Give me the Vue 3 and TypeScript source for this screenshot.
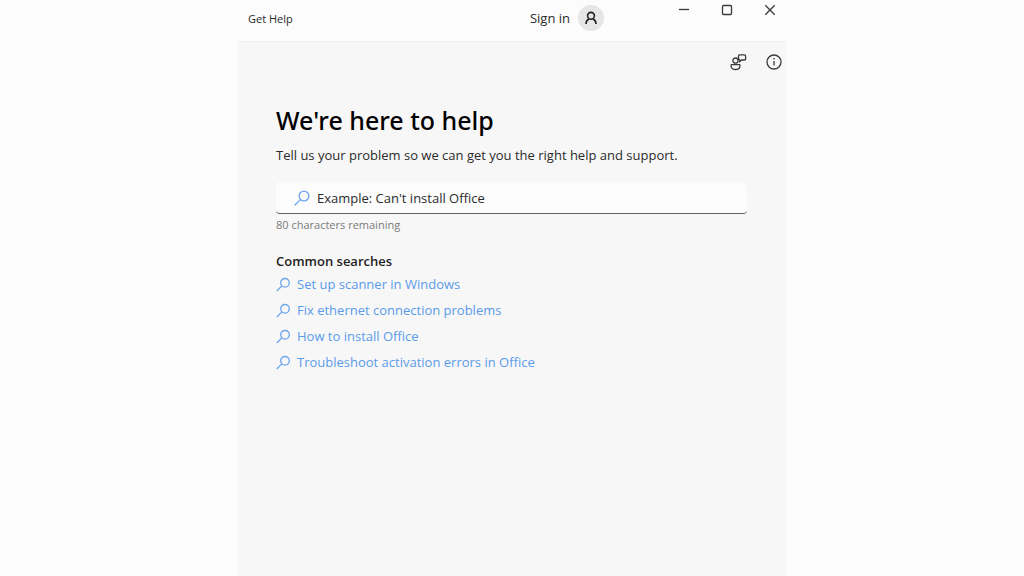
<script setup lang="ts">
import { computed, ref } from 'vue'

const limit = 80
const query = ref('')
const remaining = computed(() => limit - query.value.length)

const searches: string[] = [
  'Set up scanner in Windows',
  'Fix ethernet connection problems',
  'How to install Office',
  'Troubleshoot activation errors in Office',
]
</script>

<template>
  <div class="window">
    <header class="titlebar">
      <span class="app-name">Get Help</span>
      <button class="sign-in" type="button">
        <span>Sign in</span>
        <span class="avatar">
          <svg width="14" height="14" viewBox="0 0 14 14" aria-hidden="true">
            <circle cx="7" cy="4.8" r="3.4" />
            <path d="M2 13 C2 10.5 3 9 4.8 8 M12 13 C12 10.5 11 9 9.2 8" />
          </svg>
        </span>
      </button>
      <div class="controls">
        <button type="button" aria-label="Minimize">
          <svg width="12" height="12" viewBox="0 0 12 12"><path d="M1 5.5H11" /></svg>
        </button>
        <button type="button" aria-label="Maximize">
          <svg width="12" height="12" viewBox="0 0 12 12"><rect x="1.5" y="1.5" width="9" height="9" rx="1" /></svg>
        </button>
        <button type="button" aria-label="Close">
          <svg width="12" height="12" viewBox="0 0 12 12"><path d="M1.3 1.3L10.7 10.7M10.7 1.3L1.3 10.7" /></svg>
        </button>
      </div>
    </header>

    <div class="body">
      <div class="toolbar">
        <button type="button" aria-label="Feedback">
          <svg width="18" height="18" viewBox="0 0 18 18">
            <circle cx="6.5" cy="7.6" r="2.6" />
            <path d="M2.7 11.7H10.3Q11 11.7 11 12.4C11 15 9 16.5 6.5 16.5S2 15 2 12.4Q2 11.7 2.7 11.7Z" />
            <path d="M10.3 1.9H15.6Q16.6 1.9 16.6 2.9V6Q16.6 7 15.6 7H12.7L10.6 8.7V6.9Q9.5 6.7 9.5 5.8V2.8Q9.5 1.9 10.3 1.9Z" />
          </svg>
        </button>
        <button type="button" aria-label="About">
          <svg width="18" height="18" viewBox="0 0 18 18">
            <circle cx="9" cy="9" r="7" />
            <path d="M9 8V12.5M9 5.1V6.5" />
          </svg>
        </button>
      </div>

      <main class="content">
        <h1>We're here to help</h1>
        <label class="intro" for="problem">Tell us your problem so we can get you the right help and support.</label>
        <div class="search">
          <svg class="lens" width="18" height="18" viewBox="0 0 18 18" aria-hidden="true">
            <circle cx="11" cy="7" r="4.9" />
            <path d="M7.4 10.6L1.5 16.5" />
          </svg>
          <input id="problem" v-model="query" type="text" :maxlength="limit" placeholder="Example: Can't install Office">
        </div>
        <p class="count">{{ remaining }} characters remaining</p>
        <h2>Common searches</h2>
        <ul>
          <li v-for="item in searches" :key="item">
            <a href="#">
              <svg class="lens" width="15" height="15" viewBox="0 0 15 15" aria-hidden="true">
                <circle cx="9" cy="5.8" r="4.3" />
                <path d="M5.9 8.9L0.8 14" />
              </svg>
              <span>{{ item }}</span>
            </a>
          </li>
        </ul>
      </main>
    </div>
  </div>
</template>

<style>
body {
  background: #fcfcfc;
}
</style>

<style scoped>
.window {
  box-sizing: border-box;
  display: flex;
  flex-direction: column;
  max-width: 548px;
  min-height: 100vh;
  margin: 0 auto;
  font-family: "Open Sans", "Noto Sans", sans-serif;
  font-size: 13px;
  color: #2b2b2b;
}

button {
  padding: 0;
  border: 0;
  background: none;
  font: inherit;
  color: inherit;
}

svg {
  display: block;
  flex: none;
  fill: none;
  stroke: #3a3a3a;
  stroke-width: 1.3;
}

.titlebar {
  display: flex;
  align-items: flex-start;
  height: 41px;
  padding-left: 10px;
  border-bottom: 1px solid #efefef;
}

.app-name {
  flex: 1;
  padding-top: 10px;
  font-size: 11px;
  line-height: 18px;
}

.sign-in {
  display: flex;
  align-items: center;
  gap: 8px;
  padding-top: 5px;
  margin-right: 58px;
}

.avatar {
  display: grid;
  place-items: center;
  width: 26px;
  height: 26px;
  border-radius: 50%;
  background: #e6e6e6;
}

.avatar svg {
  stroke: #222222;
  stroke-width: 1.6;
}

.controls {
  display: flex;
  margin-right: -5px;
}

.controls button {
  display: grid;
  place-items: center;
  width: 43px;
  height: 19px;
}

.body {
  flex: 1;
  background: #f7f7f7;
}

.toolbar {
  display: flex;
  justify-content: flex-end;
  gap: 18px;
  padding: 11px 3px 0 0;
}

.content {
  padding: 28px 39px 0 38px;
}

h1 {
  margin: 0;
  font-family: "Noto Sans", "Open Sans", sans-serif;
  font-size: 25px;
  font-weight: 500;
  line-height: 42px;
  color: #000000;
}

.intro {
  display: block;
  padding-top: 4px;
  line-height: 20px;
}

.search {
  display: flex;
  align-items: center;
  gap: 6px;
  height: 31px;
  margin-top: 17px;
  padding-left: 17px;
  border-bottom: 1px solid #5f5f5f;
  border-radius: 4px;
  background: #fcfcfc;
}

.search input {
  flex: 1;
  min-width: 0;
  height: 28px;
  padding: 0;
  border: 0;
  outline: 0;
  background: none;
  font: inherit;
  color: inherit;
}

.search input::placeholder {
  color: #2b2b2b;
  opacity: 1;
}

.lens {
  stroke: #6ba5ec;
}

.count {
  margin: 1px 0 0;
  font-size: 11px;
  line-height: 20px;
  color: #7b7b7b;
}

h2 {
  margin: 16px 0 0;
  font-size: 13px;
  font-weight: 600;
  line-height: 20px;
  color: #1f1f1f;
}

ul {
  margin: 0;
  padding: 0;
  list-style: none;
}

a {
  display: flex;
  align-items: center;
  gap: 6px;
  line-height: 26px;
  color: #5a9bea;
  text-decoration: none;
}
</style>
